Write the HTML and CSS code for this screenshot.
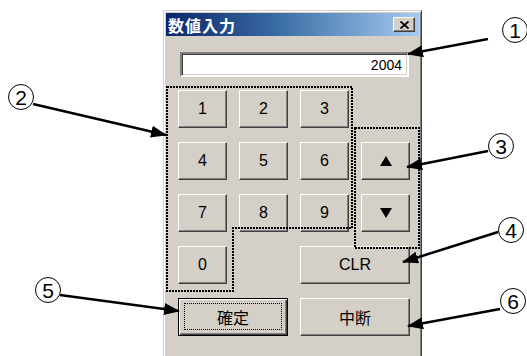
FILE: index.html
```html
<!DOCTYPE html>
<html lang="ja">
<head>
<meta charset="utf-8">
<link rel="stylesheet" href="styles.css">
</head>
<body>
<div class="page">
  <div class="dialog">
    <div class="titlebar">
      <span class="title">数値入力</span>
      <button class="close" aria-label="閉じる">
        <svg width="9" height="8" viewBox="0 0 9 8"><path d="M0.5 0.5 L8.5 7.5 M8.5 0.5 L0.5 7.5" stroke="#000" stroke-width="1.8" fill="none"/></svg>
      </button>
    </div>
    <div class="content">
      <div class="field">2004</div>
      <div class="keypad">
        <button class="btn">1</button>
        <button class="btn">2</button>
        <button class="btn">3</button>
        <span></span>
        <button class="btn">4</button>
        <button class="btn">5</button>
        <button class="btn">6</button>
        <button class="btn"><span class="tri up"></span></button>
        <button class="btn">7</button>
        <button class="btn">8</button>
        <button class="btn">9</button>
        <button class="btn"><span class="tri down"></span></button>
        <button class="btn">0</button>
        <span></span>
        <button class="btn wide">CLR</button>
        <button class="btn wide default"><span class="focus">確定</span></button>
        <button class="btn wide jp">中断</button>
      </div>
    </div>
  </div>

  <svg class="overlay" width="527" height="356" viewBox="0 0 527 356">
    <defs>
      <marker id="ah" markerUnits="userSpaceOnUse" viewBox="0 0 16 12" refX="15" refY="6" markerWidth="16" markerHeight="12" orient="auto">
        <path d="M0 0 L16 6 L0 12 Z" fill="#000"/>
      </marker>
    </defs>
    <g fill="none" stroke="#000" stroke-width="2" stroke-dasharray="2 1">
      <path d="M167 87 H352 V228 H233 V291 H167 Z"/>
      <rect x="355" y="128" width="64" height="120"/>
    </g>
    <g stroke="#000" stroke-width="2.5" marker-end="url(#ah)">
      <line x1="488" y1="39" x2="408" y2="54"/>
      <line x1="33" y1="104" x2="166" y2="135"/>
      <line x1="488" y1="151" x2="407" y2="167"/>
      <line x1="498" y1="232" x2="403" y2="262"/>
      <line x1="60" y1="295" x2="179" y2="311"/>
      <line x1="500" y1="309" x2="408" y2="326"/>
    </g>
  </svg>

  <span class="num n1">1</span>
  <span class="num n2">2</span>
  <span class="num n3">3</span>
  <span class="num n4">4</span>
  <span class="num n5">5</span>
  <span class="num n6">6</span>
</div>
</body>
</html>
```

FILE: styles.css
```css
html, body {
  margin: 0;
  padding: 0;
  background: #fff;
}

.page {
  position: relative;
  width: 527px;
  height: 356px;
  overflow: hidden;
}

.dialog {
  margin: 10px 0 0 163px;
  width: 259px;
  height: 370px;
  box-sizing: border-box;
  background: #d4d0c8;
  border: 1px solid;
  border-color: #d4d0c8 #404040 #404040 #d4d0c8;
  box-shadow: inset 1px 1px #fff, inset -1px -1px #808080;
  padding: 2px;
}

.titlebar {
  height: 23px;
  display: flex;
  align-items: center;
  justify-content: space-between;
  padding: 0 4px 0 2px;
  background: linear-gradient(to right, #0a246a 0%, #3a6ea5 45%, #a6caf0 100%);
}

.title {
  color: #fff;
  font-family: "Noto Sans CJK JP", sans-serif;
  font-weight: bold;
  font-size: 16px;
  letter-spacing: 1px;
  line-height: 1;
}

.close {
  width: 22px;
  height: 15px;
  padding: 0;
  margin: 0;
  box-sizing: border-box;
  display: flex;
  align-items: center;
  justify-content: center;
  background: #d4d0c8;
  border: 1px solid;
  border-color: #fff #404040 #404040 #fff;
  box-shadow: inset -1px -1px #808080;
}

.content {
  padding: 16px 0 0 12px;
}

.field {
  margin-left: 2px;
  width: 229px;
  height: 25px;
  box-sizing: border-box;
  background: #fff;
  border: 2px solid;
  border-color: #808080 #fff #fff #808080;
  box-shadow: inset 1px 1px #404040, inset -1px -1px #d4d0c8;
  padding: 0 5px 0 0;
  text-align: right;
  font-family: "Liberation Sans", sans-serif;
  font-size: 14px;
  line-height: 22px;
  color: #000;
}

.keypad {
  margin-top: 13px;
  display: grid;
  grid-template-columns: repeat(4, 49px);
  grid-auto-rows: 38px;
  column-gap: 12px;
  row-gap: 14px;
}

.btn {
  margin: 0;
  padding: 0;
  box-sizing: border-box;
  background: #d4d0c8;
  border: 1px solid;
  border-color: #fff #404040 #404040 #fff;
  box-shadow: inset -1px -1px #808080;
  font-family: "Liberation Sans", sans-serif;
  font-size: 16px;
  color: #000;
  display: flex;
  align-items: center;
  justify-content: center;
}

.btn.wide {
  grid-column: span 2;
  font-size: 16px;
}

.btn.jp, .btn.default {
  font-family: "Noto Sans CJK JP", sans-serif;
  font-size: 16px;
}

.btn.default {
  border: 1px solid #000;
  box-shadow: inset 1px 1px #fff, inset -1px -1px #404040, inset -2px -2px #808080;
  padding: 4px 5px 5px 5px;
}

.focus {
  flex: 1;
  align-self: stretch;
  display: flex;
  align-items: center;
  justify-content: center;
  border: 1px dotted #000;
}

.tri {
  width: 0;
  height: 0;
  border-left: 6px solid transparent;
  border-right: 6px solid transparent;
}

.tri.up {
  border-bottom: 10px solid #000;
}

.tri.down {
  border-top: 10px solid #000;
}

.overlay {
  position: absolute;
  left: 0;
  top: 0;
  pointer-events: none;
}

.num {
  position: absolute;
  width: 24px;
  height: 24px;
  border: 1px solid #000;
  border-radius: 50%;
  display: flex;
  align-items: center;
  justify-content: center;
  font-family: "Liberation Sans", sans-serif;
  font-size: 21px;
  line-height: 1;
  color: #000;
  background: #fff;
}

.n1 { left: 502px; top: 17px; }
.n2 { left: 8px; top: 84px; }
.n3 { left: 488px; top: 133px; }
.n4 { left: 498px; top: 217px; }
.n5 { left: 35px; top: 277px; }
.n6 { left: 500px; top: 288px; }
```
